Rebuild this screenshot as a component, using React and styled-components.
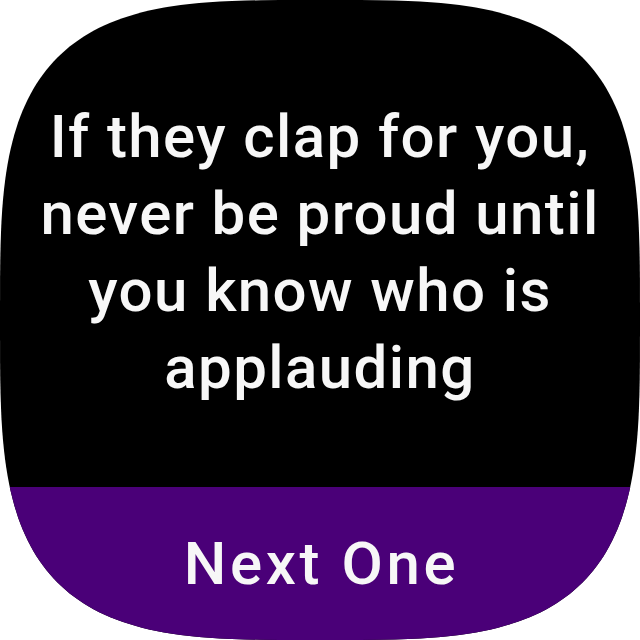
import styled, { createGlobalStyle } from "styled-components";

const GlobalStyle = createGlobalStyle`
  html, body {
    margin: 0;
    padding: 0;
    background: #ffffff;
  }
`;

// superellipse outline for the watch-face shape
const squircle = (n, steps) => {
  const pts = [];
  for (let i = 0; i < steps; i++) {
    const t = (i / steps) * Math.PI * 2;
    const c = Math.cos(t);
    const s = Math.sin(t);
    const x = Math.sign(c) * Math.pow(Math.abs(c), 2 / n);
    const y = Math.sign(s) * Math.pow(Math.abs(s), 2 / n);
    pts.push(`${(50 + x * 50).toFixed(2)}% ${(50 + y * 50).toFixed(2)}%`);
  }
  return `polygon(${pts.join(", ")})`;
};

const Face = styled.main`
  width: 640px;
  height: 640px;
  display: flex;
  flex-direction: column;
  background: #000000;
  clip-path: ${squircle(3.5, 240)};
  font-family: Roboto, "Liberation Sans", sans-serif;
  color: #f7f7f7;
`;

const Quote = styled.p`
  flex: 1;
  margin: 0;
  padding: 98px 20px 0;
  font-size: 60px;
  font-weight: 500;
  line-height: 77px;
  text-align: center;
  letter-spacing: 1.4px;
`;

const NextButton = styled.button`
  height: 153px;
  flex-shrink: 0;
  border: none;
  margin: 0;
  padding: 0 0 0 3px;
  background: #4a0078;
  color: #f7f7f7;
  font-family: inherit;
  font-size: 60px;
  font-weight: 500;
  letter-spacing: 3.6px;
  cursor: pointer;
`;

const App = () => (
  <>
    <GlobalStyle />
    <Face>
      <Quote>
        If they clap for you,
        <br />
        never be proud until
        <br />
        you know who is
        <br />
        applauding
      </Quote>
      <NextButton>Next One</NextButton>
    </Face>
  </>
);

export default App;
